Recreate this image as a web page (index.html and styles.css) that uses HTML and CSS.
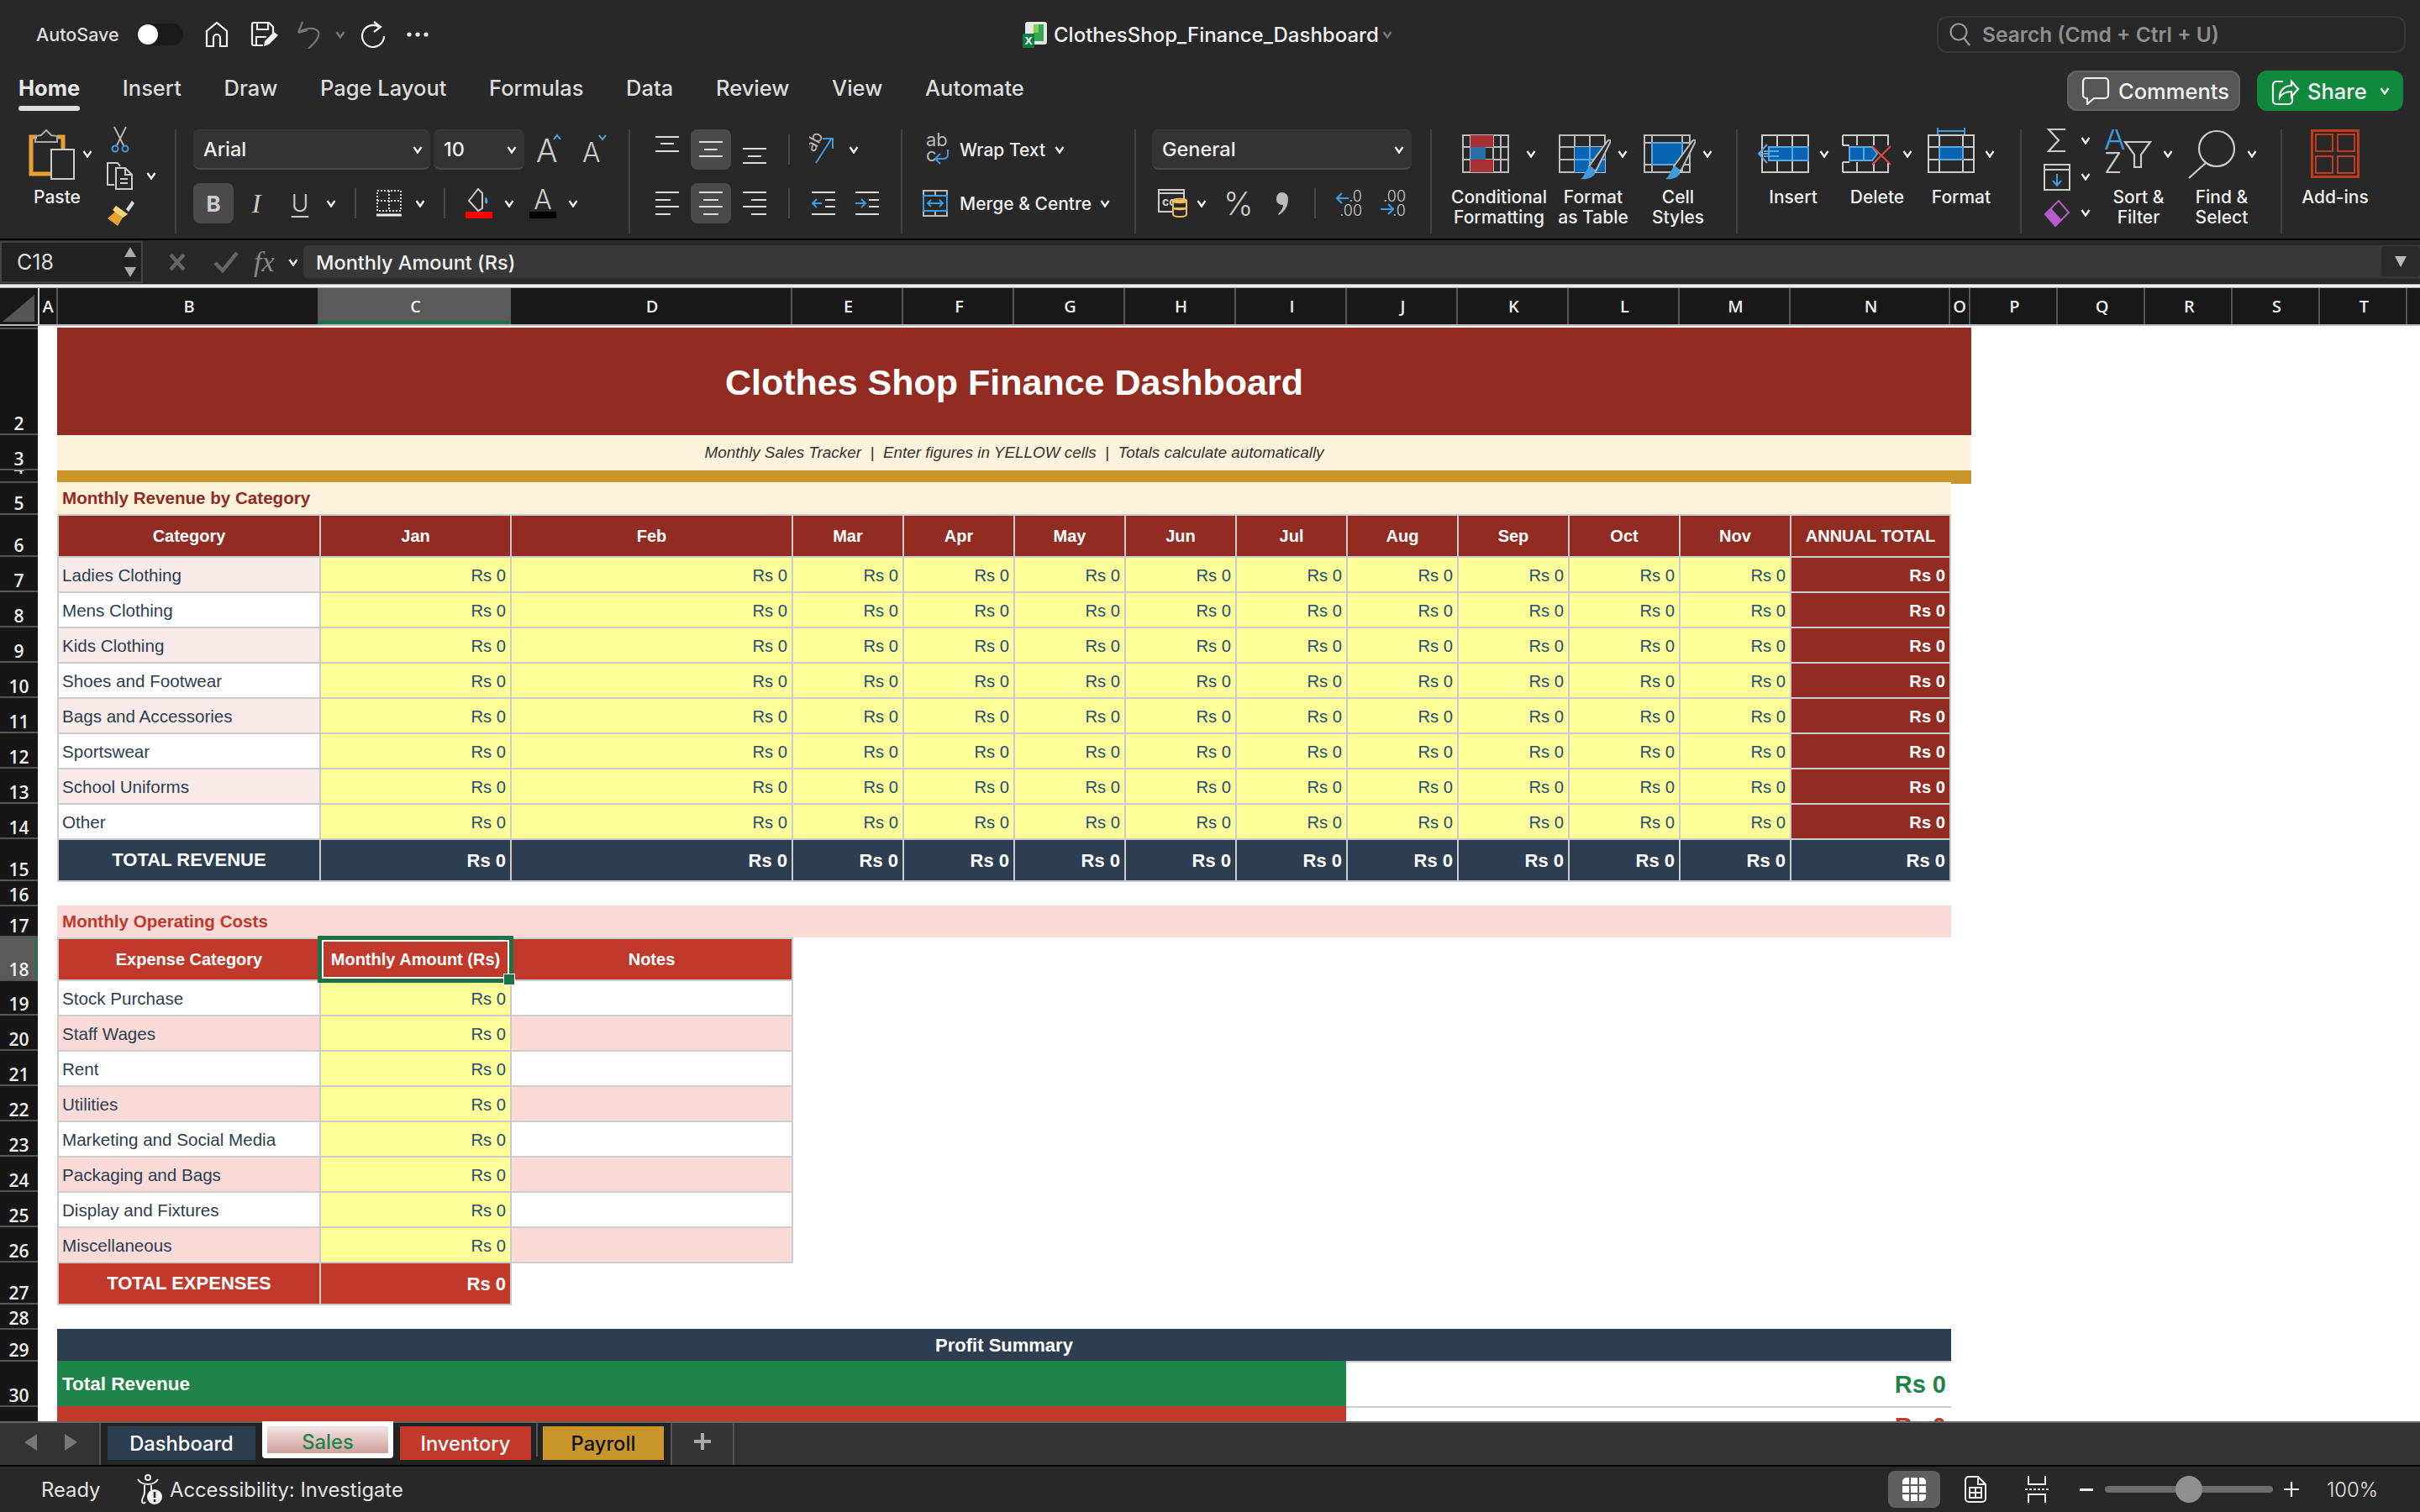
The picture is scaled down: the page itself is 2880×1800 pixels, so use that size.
FILE: index.html
```html
<!DOCTYPE html>
<html lang="en">
<head>
<meta charset="utf-8">
<title>ClothesShop_Finance_Dashboard</title>
<link rel="stylesheet" href="styles.css">
</head>
<body>
<svg class="defs" width="0" height="0"><symbol id="ch" viewBox="0 0 12 10"><path d="M1.500 2 6 8.500 10.500 2" fill="none" stroke="currentColor" stroke-width="2.400"/></symbol></svg>
<div class="app">

<header class="top">
  <span class="autosave">AutoSave</span>
  <span class="toggle"><span class="knob"></span></span>
  <svg class="ic-home" width="30" height="32" viewBox="0 0 30 32"><path d="M3 30V12L15 2l12 10v18h-8V20a4 4 0 0 0-8 0v10z" fill="none" stroke="#f2f2f2" stroke-width="2.200"/></svg>
  <svg class="ic-save" width="34" height="32" viewBox="0 0 34 32"><path d="M15 29H4a2 2 0 0 1-2-2V4a2 2 0 0 1 2-2h18l5 5v8M8 2v8h13V2M7 29V19h12" fill="none" stroke="#f2f2f2" stroke-width="2.200"/><path d="M16 30l1-6L28 13l5 4-11 11z" fill="#f2f2f2"/></svg>
  <svg class="ic-undo" width="28" height="34" viewBox="0 0 28 34"><path d="M2 15 7 2M2 15l11-3M2 15c6-5 20-8 24-1 2 6-4 13-12 20" fill="none" stroke="#777" stroke-width="2.200"/></svg>
  <svg class="ch dim m-undo"><use href="#ch"/></svg>
  <svg class="ic-redo" width="30" height="32" viewBox="0 0 30 32"><path d="M22 7a13 13 0 1 0 6 11" fill="none" stroke="#f2f2f2" stroke-width="2.200"/><path d="M16 1l8 6-8 6" fill="none" stroke="#f2f2f2" stroke-width="2.200"/></svg>
  <svg class="ic-dots" width="26" height="6" viewBox="0 0 26 6"><circle cx="3" cy="3" r="2.600" fill="#eee"/><circle cx="13" cy="3" r="2.600" fill="#eee"/><circle cx="23" cy="3" r="2.600" fill="#eee"/></svg>
  <div class="docname">
    <svg width="30" height="32" viewBox="0 0 30 32"><rect x="3" y="1" width="26" height="27" rx="3" fill="#e8e8e8"/><rect x="13" y="4" width="12" height="20" fill="#36a852"/><rect x="13" y="4" width="6" height="10" fill="#7bd04e"/><rect x="0" y="15" width="14" height="17" fill="#107c41"/><text x="7" y="28" class="xl">X</text></svg>
    <span class="docname-t">ClothesShop_Finance_Dashboard</span>
    <svg class="ch dim"><use href="#ch"/></svg>
  </div>
  <div class="search">
    <svg width="28" height="30" viewBox="0 0 28 30"><circle cx="12" cy="12" r="9.500" fill="none" stroke="#999" stroke-width="2.200"/><path d="M18 19l7 9" stroke="#999" stroke-width="2.200"/></svg>
    <span>Search (Cmd + Ctrl + U)</span>
  </div>
</header>

<nav class="menu">
  <span class="tab on">Home</span>
  <span class="tab">Insert</span>
  <span class="tab">Draw</span>
  <span class="tab">Page Layout</span>
  <span class="tab">Formulas</span>
  <span class="tab">Data</span>
  <span class="tab">Review</span>
  <span class="tab">View</span>
  <span class="tab">Automate</span>
  <button class="comments">
    <svg width="34" height="34" viewBox="0 0 34 34"><path d="M6 2h22a4 4 0 0 1 4 4v16a4 4 0 0 1-4 4H15l-8 7v-7H6a4 4 0 0 1-4-4V6a4 4 0 0 1 4-4z" fill="none" stroke="#f2f2f2" stroke-width="2.200"/></svg>
    <span>Comments</span>
  </button>
  <button class="share">
    <svg width="34" height="36" viewBox="0 0 34 36"><path d="M14 7H6a4 4 0 0 0-4 4v19a4 4 0 0 0 4 4h15a4 4 0 0 0 4-4v-5" fill="none" stroke="#f2f2f2" stroke-width="2.200"/><path d="M10 26c0-9 6-14 14-14V7l8 9-8 9v-6c-7 0-11 2-14 7z" fill="none" stroke="#f2f2f2" stroke-width="2.200"/></svg>
    <span>Share</span>
    <svg class="ch"><use href="#ch"/></svg>
  </button>
</nav>

<section class="ribbon">
  <div class="grp g1">
    <div class="paste">
      <svg width="56" height="62" viewBox="0 0 56 62"><path d="M10 10H3v44h24M34 10h7v14" fill="none" stroke="#e8a030" stroke-width="5"/><path d="M8 16V9l7-1 6-6 6 6 7 1v7z" fill="none" stroke="#aaa" stroke-width="2"/><rect x="27" y="25" width="27" height="35" fill="#282828" stroke="#ccc" stroke-width="2"/></svg>
      <span class="lbl">Paste</span>
    </div>
    <svg class="ch m-p"><use href="#ch"/></svg>
    <div class="clip">
      <svg class="m-sc" width="22" height="34" viewBox="0 0 22 34"><path d="M4 1l11 22M18 1 7 23" stroke="#bbb" stroke-width="1.800" fill="none"/><circle cx="5" cy="27" r="3.500" fill="none" stroke="#3f9ade" stroke-width="2"/><circle cx="17" cy="27" r="3.500" fill="none" stroke="#3f9ade" stroke-width="2"/></svg>
      <div class="copy">
        <svg width="34" height="34" viewBox="0 0 34 34"><path d="M10 28H2V2h12l3 4M12 8h11l8 8v17H12zM23 8v8h8M17 21h9M17 26h9" fill="none" stroke="#ccc" stroke-width="2"/></svg>
        <svg class="ch"><use href="#ch"/></svg>
      </div>
      <svg class="m-br" width="34" height="34" viewBox="0 0 34 34"><path d="M24 13 31 3l3 3-7 10z" fill="#ddd"/><path d="M12 9l14 10-6 4-6 10-12-9 8-7z" fill="#e8a030"/><path d="M12 9l14 10-6 4-12-9z" fill="#f4d57a"/></svg>
    </div>
  </div>

  <div class="grp g2">
    <div class="row">
      <div class="sel sel-font"><span>Arial</span><svg class="ch"><use href="#ch"/></svg></div>
      <div class="sel sel-size"><span>10</span><svg class="ch"><use href="#ch"/></svg></div>
      <svg class="m14" width="32" height="48" viewBox="0 0 32 48"><text x="0" y="39" class="big-a">A</text><path d="M21 12l4-5 4 5" fill="none" stroke="#5aa7e0" stroke-width="2"/></svg>
      <svg class="m23" width="30" height="48" viewBox="0 0 30 48"><text x="0" y="39" class="mid-a">A</text><path d="M20 7l4 5 4-5" fill="none" stroke="#5aa7e0" stroke-width="2"/></svg>
    </div>
    <div class="row">
      <span class="btn on-b w48">B</span>
      <span class="btn ital w46 m4">I</span>
      <span class="btn und w46 m6">U</span>
      <svg class="ch m8"><use href="#ch"/></svg>
      <i class="div m22"></i>
      <svg class="m24" width="30" height="32" viewBox="0 0 30 32"><path d="M1 1h28v24H1zM15 1v24M1 13h28" fill="none" stroke="#ddd" stroke-width="2" stroke-dasharray="2 2"/><path d="M0 30h30" stroke="#eee" stroke-width="3"/></svg>
      <svg class="ch m16"><use href="#ch"/></svg>
      <i class="div m22"></i>
      <svg class="m24" width="32" height="36" viewBox="0 0 32 36"><path d="M4 15 15 1l5 5v18l-5 3z" fill="none" stroke="#ccc" stroke-width="2"/><path d="M24 10c2 3 3 5 2 8-2 2-4-1-2-8z" fill="#5aa7e0"/><rect y="28" width="32" height="8" fill="#f00"/></svg>
      <svg class="ch m14"><use href="#ch"/></svg>
      <svg class="m18" width="32" height="36" viewBox="0 0 32 36"><text x="16" y="25" class="color-a">A</text><rect y="28" width="32" height="8" fill="#000"/></svg>
      <svg class="ch m14"><use href="#ch"/></svg>
    </div>
  </div>

  <div class="grp g3">
    <div class="row">
      <svg width="28" height="48" viewBox="0 0 28 48"><path d="M0 9h28M6 17h16M0 26h28" stroke="#ddd" stroke-width="2"/></svg>
      <span class="btn on-b w48 m14"><svg width="28" height="48" viewBox="0 0 28 48"><path d="M0 15h28M6 24h16M0 32h28" stroke="#ddd" stroke-width="2"/></svg></span>
      <svg class="m14" width="28" height="48" viewBox="0 0 28 48"><path d="M0 23h28M6 32h16M0 40h28" stroke="#ddd" stroke-width="2"/></svg>
      <i class="div m26"></i>
      <svg class="m23" width="34" height="48" viewBox="0 0 34 48"><text x="0" y="0" class="ab-rot" transform="translate(6 28) rotate(-62)">ab</text><path d="M8 40 26 12M16 11h12v12" fill="none" stroke="#3f9ade" stroke-width="2"/></svg>
      <svg class="ch m13"><use href="#ch"/></svg>
    </div>
    <div class="row">
      <svg width="28" height="48" viewBox="0 0 28 48"><path d="M0 11h28M0 20h18M0 28h28M0 37h18" stroke="#ddd" stroke-width="2"/></svg>
      <span class="btn on-b w48 m14"><svg width="28" height="48" viewBox="0 0 28 48"><path d="M0 11h28M5 20h18M0 28h28M5 37h18" stroke="#ddd" stroke-width="2"/></svg></span>
      <svg class="m14" width="28" height="48" viewBox="0 0 28 48"><path d="M0 11h28M10 20h18M0 28h28M10 37h18" stroke="#ddd" stroke-width="2"/></svg>
      <i class="div m26"></i>
      <svg class="m26" width="28" height="48" viewBox="0 0 28 48"><path d="M0 11h28M16 20h12M16 28h12M0 37h28" stroke="#ddd" stroke-width="2"/><path d="M12 24H1M6 19l-5 5 5 5" fill="none" stroke="#3f9ade" stroke-width="2"/></svg>
      <svg class="m24" width="28" height="48" viewBox="0 0 28 48"><path d="M0 11h28M16 20h12M16 28h12M0 37h28" stroke="#ddd" stroke-width="2"/><path d="M0 24h12M7 19l5 5-5 5" fill="none" stroke="#3f9ade" stroke-width="2"/></svg>
    </div>
  </div>

  <div class="grp g4">
    <div class="row">
      <svg width="34" height="48" viewBox="0 0 34 48"><text x="4" y="20" class="wrap-t">ab</text><text x="4" y="38" class="wrap-t">c</text><path d="M30 24v6c0 4-3 5-6 5H15M21 29l-6 6 6 6" fill="none" stroke="#3f9ade" stroke-width="2"/></svg>
      <span class="cmd m10">Wrap Text</span>
      <svg class="ch m11"><use href="#ch"/></svg>
    </div>
    <div class="row">
      <svg width="30" height="48" viewBox="0 0 30 48"><path d="M1 9h28v30H1zM15 9v6M15 33v6" fill="none" stroke="#bbb" stroke-width="2"/><path d="M1 15h28v18H1z" fill="none" stroke="#3f9ade" stroke-width="2"/><path d="M6 24h18M10 20l-4 4 4 4M20 20l4 4-4 4" fill="none" stroke="#3f9ade" stroke-width="2"/></svg>
      <span class="cmd m14">Merge &amp; Centre</span>
      <svg class="ch m10"><use href="#ch"/></svg>
    </div>
  </div>

  <div class="grp g5">
    <div class="row">
      <div class="sel sel-num"><span>General</span><svg class="ch"><use href="#ch"/></svg></div>
    </div>
    <div class="row">
      <svg class="m7" width="36" height="34" viewBox="0 0 36 34"><path d="M1 1h30v26H1z" fill="none" stroke="#ccc" stroke-width="2"/><path d="M1 5h30" stroke="#ccc" stroke-width="2"/><text x="5" y="20" class="cc">cc</text><path d="M18 14c0-3 16-3 16 0v16c0 4-16 4-16 0z" fill="#282828" stroke="#f0c060" stroke-width="2"/><path d="M18 14c0 3 16 3 16 0zM18 22c0 3 16 3 16 0" fill="#f0c060" stroke="#f0c060" stroke-width="2"/></svg>
      <svg class="ch m10"><use href="#ch"/></svg>
      <span class="pct m20">%</span>
      <svg class="m31" width="15" height="28" viewBox="0 0 15 28"><path d="M7 1c5 0 8 3 8 8 0 8-4 15-11 19l-1-1c4-4 6-8 6-11-4 0-8-2-8-7 0-5 3-8 6-8z" fill="#bbb"/></svg>
      <i class="div m31"></i>
      <svg class="m23" width="32" height="34" viewBox="0 0 32 34"><text x="32" y="15" class="dec">.0</text><text x="32" y="32" class="dec">.00</text><path d="M16 11H2M8 5 2 11l6 6" fill="none" stroke="#3f9ade" stroke-width="2.200"/></svg>
      <svg class="m20" width="32" height="34" viewBox="0 0 32 34"><text x="32" y="15" class="dec">.00</text><text x="32" y="32" class="dec">.0</text><path d="M2 24h14M11 18l6 6-6 6" fill="none" stroke="#3f9ade" stroke-width="2.200"/></svg>
    </div>
  </div>

  <div class="grp g6">
    <div class="big w120">
      <div class="bt">
        <svg class="t6" width="56" height="46" viewBox="0 0 56 46"><path d="M1 1h54v44H1zM10 1v44M37 1v44M46 1v44M1 15h54M1 30h54" fill="none" stroke="#bbb" stroke-width="2"/><rect x="10" y="1" width="27" height="14" fill="#a82f32"/><rect x="10" y="15" width="18" height="15" fill="#2a6ea8"/><rect x="10" y="30" width="27" height="15" fill="#a82f32"/></svg>
        <svg class="ch m20 t24"><use href="#ch"/></svg>
      </div>
      <span class="lbl">Conditional<br>Formatting</span>
    </div>
    <div class="big w100 m2">
      <div class="bt">
        <svg class="t6" width="62" height="56" viewBox="0 0 62 56"><path d="M1 1h54v44H1zM19 1v44M37 1v44M1 15h54M1 30h54" fill="none" stroke="#bbb" stroke-width="2"/><rect x="19" y="15" width="36" height="30" fill="#0a64b4"/><path d="M19 30h36M37 15v30" stroke="#5aa7e0" stroke-width="2"/><path d="M36 38 58 8c3-3 4 0 3 2L44 44z" fill="#282828" stroke="#bbb" stroke-width="2"/><path d="M36 38c4 0 8 4 7 9-3 5-10 7-17 6 4-2 5-8 10-15z" fill="#3f9ade"/></svg>
        <svg class="ch m8 t24"><use href="#ch"/></svg>
      </div>
      <span class="lbl">Format<br>as Table</span>
    </div>
    <div class="big w90 m6">
      <div class="bt">
        <svg class="t6" width="62" height="56" viewBox="0 0 62 56"><path d="M1 1h54v44H1zM10 1v44M46 1v44M1 10h54M1 36h54" fill="none" stroke="#bbb" stroke-width="2"/><rect x="10" y="10" width="36" height="26" fill="#0a64b4" stroke="#5aa7e0" stroke-width="2"/><path d="M36 38 58 8c3-3 4 0 3 2L44 44z" fill="#282828" stroke="#bbb" stroke-width="2"/><path d="M36 38c4 0 8 4 7 9-3 5-10 7-17 6 4-2 5-8 10-15z" fill="#3f9ade"/></svg>
        <svg class="ch m8 t24"><use href="#ch"/></svg>
      </div>
      <span class="lbl">Cell<br>Styles</span>
    </div>
  </div>

  <div class="grp g7">
    <div class="big w100">
      <div class="bt">
        <svg class="t6" width="62" height="46" viewBox="0 0 62 46"><path d="M6 1h55v44H6zM24 1v44M42 1v44" fill="none" stroke="#ccc" stroke-width="2"/><rect x="14" y="15" width="47" height="16" fill="#0a64b4" stroke="#5aa7e0" stroke-width="2"/><path d="M42 15v16M14 23H2M12 12 2 23l10 11M26 20H8M26 26H8" fill="none" stroke="#5aa7e0" stroke-width="2"/></svg>
        <svg class="ch m12 t24"><use href="#ch"/></svg>
      </div>
      <span class="lbl">Insert</span>
    </div>
    <div class="big w100">
      <div class="bt">
        <svg class="t6" width="60" height="46" viewBox="0 0 60 46"><path d="M1 1h54v12M1 1v12M1 45h54V33M1 45V33M1 13h8M1 33h8M18 1v12M18 33v12M38 1v12M38 33v12" fill="none" stroke="#ccc" stroke-width="2"/><path d="M9 15h27l6 8-6 8H9z" fill="#0a64b4" stroke="#5aa7e0" stroke-width="2"/><path d="M26 15v16" stroke="#5aa7e0" stroke-width="2"/><path d="M36 14l22 22M58 14 36 36" stroke="#e24a4a" stroke-width="2"/></svg>
        <svg class="ch m12 t24"><use href="#ch"/></svg>
      </div>
      <span class="lbl">Delete</span>
    </div>
    <div class="big w100">
      <div class="bt">
        <svg class="t-4" width="56" height="56" viewBox="0 0 56 56"><path d="M12 6h32M12 2v8M44 2v8" stroke="#3f9ade" stroke-width="2"/><path d="M1 11h54v44H1zM14 11v44M42 11v44M1 25h54M1 40h54" fill="none" stroke="#ccc" stroke-width="2"/><rect x="14" y="25" width="28" height="15" fill="#0a64b4" stroke="#5aa7e0" stroke-width="2"/></svg>
        <svg class="ch m12 t24"><use href="#ch"/></svg>
      </div>
      <span class="lbl">Format</span>
    </div>
  </div>

  <div class="grp g8">
    <div class="stack">
      <div class="sr"><svg width="30" height="30" viewBox="0 0 30 30"><path d="M26 2H6l12 13L6 28h20" fill="none" stroke="#ccc" stroke-width="2.200"/></svg><svg class="ch m14"><use href="#ch"/></svg></div>
      <div class="sr"><svg width="32" height="32" viewBox="0 0 32 32"><path d="M1 1h30v30H1zM1 7h30" fill="none" stroke="#ccc" stroke-width="2"/><path d="M16 12v14M11 20l5 6 5-6" fill="none" stroke="#3f9ade" stroke-width="2"/></svg><svg class="ch m12"><use href="#ch"/></svg></div>
      <div class="sr"><svg width="32" height="32" viewBox="0 0 32 32"><path d="M2 17 18 1l12 14-16 16z" fill="none" stroke="#b65cc8" stroke-width="2"/><path d="M2 17l7-7 12 13-7 8z" fill="#b65cc8"/></svg><svg class="ch m12"><use href="#ch"/></svg></div>
    </div>
    <div class="big w90">
      <div class="bt">
        <svg width="58" height="56" viewBox="0 0 58 56"><text x="0" y="24" class="az-a">A</text><text x="0" y="52" class="az-z">Z</text><path d="M25 15h30l-11 15v15h-8V30z" fill="none" stroke="#ccc" stroke-width="2.200"/></svg>
        <svg class="ch m12 t24"><use href="#ch"/></svg>
      </div>
      <span class="lbl">Sort &amp;<br>Filter</span>
    </div>
    <div class="big w90 m9">
      <div class="bt">
        <svg width="60" height="60" viewBox="0 0 60 60"><circle cx="36" cy="23" r="21" fill="none" stroke="#ccc" stroke-width="2.200"/><path d="M23 40 3 58" stroke="#ccc" stroke-width="2.200"/></svg>
        <svg class="ch m12 t24"><use href="#ch"/></svg>
      </div>
      <span class="lbl">Find &amp;<br>Select</span>
    </div>
  </div>

  <div class="grp g9">
    <div class="big w100">
      <div class="bt">
        <svg width="58" height="58" viewBox="0 0 58 58"><rect x="1.500" y="1.500" width="55" height="55" fill="none" stroke="#c03a1c" stroke-width="3"/><path d="M6 6h20v20H6zM32 6h20v20H32zM6 32h20v20H6zM32 32h20v20H32z" fill="none" stroke="#c03a1c" stroke-width="2"/></svg>
      </div>
      <span class="lbl">Add-ins</span>
    </div>
  </div>
</section>

<div class="fbar">
  <div class="namebox">
    <span>C18</span>
    <svg width="14" height="36" viewBox="0 0 14 36"><path d="M7 0l7 12H0zM0 24h14l-7 12z" fill="#aaa"/></svg>
  </div>
  <svg class="fx-x" width="22" height="24" viewBox="0 0 22 24"><path d="M3 3l16 18M19 3 3 21" stroke="#666" stroke-width="4.500"/></svg>
  <svg class="fx-c" width="30" height="26" viewBox="0 0 30 26"><path d="M2 14l9 9L28 2" fill="none" stroke="#666" stroke-width="4.500"/></svg>
  <span class="fx">fx</span>
  <svg class="ch fx-ch"><use href="#ch"/></svg>
  <div class="finput">
    <span>Monthly Amount (Rs)</span>
    <span class="fdrop"><svg width="14" height="14" viewBox="0 0 14 14"><path d="M0 1h14L7 14z" fill="#bbb"/></svg></span>
  </div>
</div>
<div class="fsep"></div>

<main class="sheet">
  <div class="cols">
    <div class="corner"><svg width="38" height="32" viewBox="0 0 38 32"><path d="M38 0v32H0z" fill="#555"/></svg></div>
    <div class="col ca">A</div>
    <div class="col cb">B</div>
    <div class="col cc2 sel-col">C</div>
    <div class="col cd">D</div>
    <div class="col cm">E</div><div class="col cm">F</div><div class="col cm">G</div><div class="col cm">H</div><div class="col cm">I</div><div class="col cm">J</div><div class="col cm">K</div><div class="col cm">L</div><div class="col cm">M</div>
    <div class="col cn">N</div>
    <div class="col co">O</div>
    <div class="col cp">P</div><div class="col cp">Q</div><div class="col cp">R</div><div class="col cp">S</div><div class="col cp">T</div>
  </div>
  <div class="body">
    <div class="rows">
      <div class="rh h4"></div>
      <div class="rh h126">2</div>
      <div class="rh h42">3</div>
      <div class="rh h15">4</div>
      <div class="rh h38">5</div>
      <div class="rh h50">6</div>
      <div class="rh h42">7</div><div class="rh h42">8</div><div class="rh h42">9</div><div class="rh h42">10</div><div class="rh h42">11</div><div class="rh h42">12</div><div class="rh h42">13</div><div class="rh h42">14</div>
      <div class="rh h50">15</div>
      <div class="rh h30">16</div>
      <div class="rh h37">17</div>
      <div class="rh h52 rsel">18</div>
      <div class="rh h41">19</div>
      <div class="rh h42">20</div><div class="rh h42">21</div><div class="rh h42">22</div><div class="rh h42">23</div><div class="rh h42">24</div><div class="rh h42">25</div><div class="rh h42">26</div>
      <div class="rh h50">27</div>
      <div class="rh h30">28</div>
      <div class="rh h38">29</div>
      <div class="rh h54">30</div>
      <div class="rh h54"></div>
    </div>
    <div class="grid">
      <div class="title">Clothes Shop Finance Dashboard</div>
      <div class="sub">Monthly Sales Tracker  |  Enter figures in YELLOW cells  |  Totals calculate automatically</div>
      <div class="gold"></div>
      <div class="sec sec-rev">Monthly Revenue by Category</div>

      <div class="tbl t-rev">
        <div class="th red1">Category</div><div class="th red1">Jan</div><div class="th red1">Feb</div><div class="th red1">Mar</div><div class="th red1">Apr</div><div class="th red1">May</div><div class="th red1">Jun</div><div class="th red1">Jul</div><div class="th red1">Aug</div><div class="th red1">Sep</div><div class="th red1">Oct</div><div class="th red1">Nov</div><div class="th red1">ANNUAL TOTAL</div>

        <div class="lb pk1">Ladies Clothing</div><div class="y">Rs 0</div><div class="y">Rs 0</div><div class="y">Rs 0</div><div class="y">Rs 0</div><div class="y">Rs 0</div><div class="y">Rs 0</div><div class="y">Rs 0</div><div class="y">Rs 0</div><div class="y">Rs 0</div><div class="y">Rs 0</div><div class="y">Rs 0</div><div class="at">Rs 0</div>
        <div class="lb">Mens Clothing</div><div class="y">Rs 0</div><div class="y">Rs 0</div><div class="y">Rs 0</div><div class="y">Rs 0</div><div class="y">Rs 0</div><div class="y">Rs 0</div><div class="y">Rs 0</div><div class="y">Rs 0</div><div class="y">Rs 0</div><div class="y">Rs 0</div><div class="y">Rs 0</div><div class="at">Rs 0</div>
        <div class="lb pk1">Kids Clothing</div><div class="y">Rs 0</div><div class="y">Rs 0</div><div class="y">Rs 0</div><div class="y">Rs 0</div><div class="y">Rs 0</div><div class="y">Rs 0</div><div class="y">Rs 0</div><div class="y">Rs 0</div><div class="y">Rs 0</div><div class="y">Rs 0</div><div class="y">Rs 0</div><div class="at">Rs 0</div>
        <div class="lb">Shoes and Footwear</div><div class="y">Rs 0</div><div class="y">Rs 0</div><div class="y">Rs 0</div><div class="y">Rs 0</div><div class="y">Rs 0</div><div class="y">Rs 0</div><div class="y">Rs 0</div><div class="y">Rs 0</div><div class="y">Rs 0</div><div class="y">Rs 0</div><div class="y">Rs 0</div><div class="at">Rs 0</div>
        <div class="lb pk1">Bags and Accessories</div><div class="y">Rs 0</div><div class="y">Rs 0</div><div class="y">Rs 0</div><div class="y">Rs 0</div><div class="y">Rs 0</div><div class="y">Rs 0</div><div class="y">Rs 0</div><div class="y">Rs 0</div><div class="y">Rs 0</div><div class="y">Rs 0</div><div class="y">Rs 0</div><div class="at">Rs 0</div>
        <div class="lb">Sportswear</div><div class="y">Rs 0</div><div class="y">Rs 0</div><div class="y">Rs 0</div><div class="y">Rs 0</div><div class="y">Rs 0</div><div class="y">Rs 0</div><div class="y">Rs 0</div><div class="y">Rs 0</div><div class="y">Rs 0</div><div class="y">Rs 0</div><div class="y">Rs 0</div><div class="at">Rs 0</div>
        <div class="lb pk1">School Uniforms</div><div class="y">Rs 0</div><div class="y">Rs 0</div><div class="y">Rs 0</div><div class="y">Rs 0</div><div class="y">Rs 0</div><div class="y">Rs 0</div><div class="y">Rs 0</div><div class="y">Rs 0</div><div class="y">Rs 0</div><div class="y">Rs 0</div><div class="y">Rs 0</div><div class="at">Rs 0</div>
        <div class="lb">Other</div><div class="y">Rs 0</div><div class="y">Rs 0</div><div class="y">Rs 0</div><div class="y">Rs 0</div><div class="y">Rs 0</div><div class="y">Rs 0</div><div class="y">Rs 0</div><div class="y">Rs 0</div><div class="y">Rs 0</div><div class="y">Rs 0</div><div class="y">Rs 0</div><div class="at">Rs 0</div>

        <div class="tt navy">TOTAL REVENUE</div><div class="tr navy">Rs 0</div><div class="tr navy">Rs 0</div><div class="tr navy">Rs 0</div><div class="tr navy">Rs 0</div><div class="tr navy">Rs 0</div><div class="tr navy">Rs 0</div><div class="tr navy">Rs 0</div><div class="tr navy">Rs 0</div><div class="tr navy">Rs 0</div><div class="tr navy">Rs 0</div><div class="tr navy">Rs 0</div><div class="tr navy">Rs 0</div>
      </div>

      <div class="sec sec-cost">Monthly Operating Costs</div>

      <div class="tbl t-cost">
        <div class="th red2">Expense Category</div>
        <div class="th red2 active">Monthly Amount (Rs)<span class="handle"></span></div>
        <div class="th red2">Notes</div>
        <div class="lb">Stock Purchase</div><div class="y">Rs 0</div><div class="nt"></div>
        <div class="lb pk2">Staff Wages</div><div class="y">Rs 0</div><div class="nt pk2"></div>
        <div class="lb">Rent</div><div class="y">Rs 0</div><div class="nt"></div>
        <div class="lb pk2">Utilities</div><div class="y">Rs 0</div><div class="nt pk2"></div>
        <div class="lb">Marketing and Social Media</div><div class="y">Rs 0</div><div class="nt"></div>
        <div class="lb pk2">Packaging and Bags</div><div class="y">Rs 0</div><div class="nt pk2"></div>
        <div class="lb">Display and Fixtures</div><div class="y">Rs 0</div><div class="nt"></div>
        <div class="lb pk2">Miscellaneous</div><div class="y">Rs 0</div><div class="nt pk2"></div>
      </div>
      <div class="tbl t-exp">
        <div class="tt red2">TOTAL EXPENSES</div><div class="tr red2">Rs 0</div>
      </div>

      <div class="profit">Profit Summary</div>
      <div class="pr">
        <div class="pl green">Total Revenue</div>
        <div class="pv pv-g">Rs 0</div>
      </div>
      <div class="pr">
        <div class="pl red2">Total Expenses</div>
        <div class="pv pv-r">Rs 0</div>
      </div>
    </div>
  </div>
</main>

<div class="tabsbar">
  <div class="nav">
    <svg width="16" height="20" viewBox="0 0 16 20"><path d="M15 0v20L0 10z" fill="#777"/></svg>
    <svg width="16" height="20" viewBox="0 0 16 20"><path d="M1 0v20l15-10z" fill="#777"/></svg>
  </div>
  <div class="strip">
    <span class="st st-d">Dashboard</span>
    <span class="st-w"><span class="st-s">Sales</span></span>
    <span class="st st-i">Inventory</span>
    <i class="st-sep"></i>
    <span class="st st-p">Payroll</span>
  </div>
  <div class="plus"><svg width="22" height="22" viewBox="0 0 22 22"><path d="M11 1v20M1 11h20" stroke="#aaa" stroke-width="4"/></svg></div>
</div>

<footer class="status">
  <span class="ready">Ready</span>
  <svg class="acc" width="32" height="36" viewBox="0 0 32 36"><circle cx="14" cy="4" r="3" fill="none" stroke="#eee" stroke-width="2"/><path d="M2 6c3 5 7 6 12 6s9-1 12-6M10 13v8c0 5-3 7-3 11 0 3 3 3 4 1M18 13v8" fill="none" stroke="#eee" stroke-width="2"/><circle cx="22" cy="27" r="9" fill="#eee"/><path d="M22 21v7M22 30v3" stroke="#282828" stroke-width="2.600"/></svg>
  <span class="acc-t">Accessibility: Investigate</span>
  <div class="view on-v"><svg width="28" height="28" viewBox="0 0 28 28"><path d="M5 0h3v8H0V5a5 5 0 0 1 5-5zM10 0h8v8h-8zM20 0h3a5 5 0 0 1 5 5v3h-8zM0 10h8v8H0zM10 10h8v8h-8zM20 10h8v8h-8zM0 20h8v8H5a5 5 0 0 1-5-5zM10 20h8v8h-8zM20 20h8v3a5 5 0 0 1-5 5h-3z" fill="#fff"/></svg></div>
  <svg class="v-page" width="26" height="32" viewBox="0 0 26 32"><path d="M5 1h11l9 9v17a4 4 0 0 1-4 4H5a4 4 0 0 1-4-4V5a4 4 0 0 1 4-4zM16 1v9h9" fill="none" stroke="#eee" stroke-width="2"/><path d="M6 14h14v12H6zM6 20h14M13 14v12" fill="none" stroke="#eee" stroke-width="2"/></svg>
  <svg class="v-break" width="28" height="32" viewBox="0 0 28 32"><path d="M4 0v10h20V0M4 32V22h20v10" fill="none" stroke="#eee" stroke-width="2"/><path d="M0 16h28" stroke="#eee" stroke-width="2" stroke-dasharray="3 2"/></svg>
  <i class="z-minus"></i>
  <div class="slider"><span class="zknob"></span></div>
  <svg class="z-plus" width="18" height="18" viewBox="0 0 18 18"><path d="M9 0v18M0 9h18" stroke="#eee" stroke-width="2.200"/></svg>
  <span class="zoom">100%</span>
</footer>

</div>
</body>
</html>
```
FILE: styles.css
```css
* { box-sizing: border-box; }
html, body { margin: 0; padding: 0; background: #282828; }
body { font-family: "Inter", "Liberation Sans", sans-serif; color: #e8e8e8; }
.defs { position: absolute; }
.app { width: 2880px; height: 1800px; display: flex; flex-direction: column; overflow: hidden; background: #282828; }
svg { display: block; flex: none; }
i { display: block; flex: none; font-style: normal; }

.ch { width: 12px; height: 10px; color: #eee; flex: none; }
.ch.dim { color: #777; }

/* Title bar */
.top { height: 82px; flex: none; display: flex; align-items: center; padding-left: 43px; }
.autosave { font-size: 21.500px; font-weight: 500; color: #ddd; width: 99px; white-space: nowrap; }
.toggle { margin-left: 21px; width: 55px; height: 26px; border-radius: 13px; background: #1a1a1a; display: block; padding: 1px; }
.knob { display: block; width: 24px; height: 24px; border-radius: 12px; background: #fff; }
.ic-home { margin-left: 25px; }
.ic-save { margin-left: 25px; }
.ic-undo { margin-left: 21px; }
.m-undo { margin-left: 18px; }
.ic-redo { margin-left: 18px; }
.ic-dots { margin-left: 25px; }
.docname { margin-left: 707px; display: flex; align-items: center; }
.docname-t { font-size: 24px; font-weight: 500; color: #f0f0f0; margin-left: 7px; white-space: nowrap; width: 381px; }
.docname .ch { margin-left: 10px; }
.xl { font: 700 13px "Liberation Sans", sans-serif; fill: #fff; text-anchor: middle; }
.search { margin-left: auto; margin-right: 17px; width: 558px; height: 44px; border: 2px solid #383838; border-radius: 12px; display: flex; align-items: center; padding-left: 12px; font-size: 24.500px; font-weight: 600; color: #8f8f8f; }
.search span { margin-left: 12px; white-space: nowrap; }

/* Menu */
.menu { height: 68px; flex: none; display: flex; align-items: flex-start; padding-left: 22px; color: #dcdcdc; font-size: 25.500px; font-weight: 500; }
.tab { display: block; margin-right: 50.700px; line-height: 36px; padding-top: 5px; white-space: nowrap; }
.tab.on { font-weight: 700; color: #e8e8e8; }
.tab.on::after { content: ""; display: block; height: 6px; border-radius: 3px; background: #ddd; margin-top: 3px; }
.comments, .share { font: inherit; border: 0; display: flex; align-items: center; height: 48px; border-radius: 12px; margin-top: 2px; color: #f2f2f2; padding: 0; font-size: 25.500px; font-weight: 500; }
.comments { margin-left: auto; width: 206px; background: #565656; box-shadow: inset 0 0 0 2px #636363; padding-left: 17px; }
.comments span { margin-left: 10px; }
.share { margin-left: 20px; margin-right: 20px; width: 174px; background: #10893e; padding-left: 17px; }
.share span { margin-left: 9px; }
.share .ch { margin-left: 15px; }

/* Ribbon */
.ribbon { height: 134px; flex: none; display: flex; align-items: flex-start; padding-top: 4px; }
.grp { height: 124px; flex: none; border-right: 2px solid #444; display: flex; }
.g1 { width: 210px; padding-left: 34px; }
.g2 { width: 540px; padding-left: 20px; flex-direction: column; gap: 16px; }
.g3 { width: 324px; padding-left: 30px; flex-direction: column; gap: 16px; }
.g4 { width: 278px; padding-left: 24px; flex-direction: column; gap: 16px; }
.g5 { width: 352px; padding-left: 19px; flex-direction: column; gap: 16px; }
.g6 { width: 364px; padding-left: 20px; }
.g7 { width: 338px; padding-left: 16px; }
.g8 { width: 310px; padding-left: 26px; }
.g9 { border-right: 0; padding-left: 13px; }
.row { display: flex; align-items: center; height: 48px; }
.lbl { font-size: 21px; font-weight: 500; line-height: 24px; color: #eee; text-align: center; white-space: nowrap; display: block; }

.paste { width: 68px; display: flex; flex-direction: column; align-items: center; flex: none; }
.paste svg { margin-top: -1px; align-self: flex-start; }
.paste .lbl { margin-top: 8px; }
.m-p { margin-left: -4px; margin-top: 24px; }
.clip { margin-left: 16px; display: flex; flex-direction: column; align-items: flex-start; }
.m-sc { margin-top: -4px; margin-left: 6px; }
.copy { display: flex; align-items: center; margin-top: 8px; }
.copy .ch { margin-left: 14px; }
.m-br { margin-top: 10px; }

.sel { display: flex; align-items: center; justify-content: space-between; height: 48px; background: #333; border-radius: 8px; border-bottom: 2px solid #4a4a4a; border-top: 1px solid #3c3c3c; font-size: 23.500px; font-weight: 500; color: #eee; padding: 0 9px 0 12px; }
.sel-font { width: 282px; }
.sel-size { width: 108px; margin-left: 4px; padding-left: 12px; }
.sel-num { width: 309px; }
.big-a { font: 300 38px "Inter", sans-serif; fill: #ccc; }
.mid-a { font: 300 32px "Inter", sans-serif; fill: #ccc; }
.btn { display: flex; align-items: center; justify-content: center; height: 48px; color: #ccc; flex: none; }
.on-b { background: #4a4a4a; border-radius: 8px; font-weight: 700; font-size: 26px; }
.w48 { width: 48px; }
.w46 { width: 46px; }
.ital { font: italic 400 32px "Liberation Serif", serif; }
.und { font-size: 28px; font-weight: 300; text-decoration: underline; text-underline-offset: 5px; }
.div { width: 2px; height: 36px; background: #4a4a4a; }
.color-a { font: 300 32px "Inter", sans-serif; fill: #ccc; text-anchor: middle; }
.ab-rot { font: 400 20px "Inter", sans-serif; fill: #bbb; }
.wrap-t { font: 400 22px "Inter", sans-serif; fill: #bbb; }
.cmd { font-size: 21px; font-weight: 500; color: #eee; white-space: nowrap; }
.cc { font: 700 14px "Inter", sans-serif; fill: #ccc; }
.pct { font-size: 38px; font-weight: 300; color: #ccc; width: 31px; display: block; text-align: center; line-height: 48px; }
.dec { font: 300 18px "Inter", sans-serif; fill: #ccc; text-anchor: end; }

.m2 { margin-left: 2px; } .m4 { margin-left: 4px; } .m6 { margin-left: 6px; } .m7 { margin-left: 7px; } .m8 { margin-left: 8px; } .m9 { margin-left: 9px; }
.m10 { margin-left: 10px; } .m11 { margin-left: 11px; } .m12 { margin-left: 12px; } .m13 { margin-left: 13px; } .m14 { margin-left: 14px; } .m16 { margin-left: 16px; }
.m18 { margin-left: 18px; } .m20 { margin-left: 20px; } .m22 { margin-left: 22px; } .m23 { margin-left: 23px; } .m24 { margin-left: 24px; } .m26 { margin-left: 26px; } .m31 { margin-left: 31px; }

.big { display: flex; flex-direction: column; align-items: center; flex: none; }
.w120 { width: 120px; } .w100 { width: 100px; } .w90 { width: 90px; }
.bt { display: flex; height: 69px; align-items: flex-start; }
.t6 { margin-top: 6px; }
.t-4 { margin-top: -4px; }
.t24 { margin-top: 24px; }
.stack { width: 68px; flex: none; margin-top: -2px; }
.sr { height: 43px; display: flex; align-items: flex-start; }
.sr .ch { margin-top: 10px; }
.az-a { font: 300 38px "Inter", sans-serif; fill: #3f9ade; }
.az-z { font: 300 34px "Inter", sans-serif; fill: #ccc; }

/* Formula bar */
.fbar { height: 54px; flex: none; border-top: 2px solid #000; display: flex; align-items: center; }
.namebox { width: 170px; height: 50px; background: #222; border: 2px solid #444; display: flex; align-items: center; justify-content: space-between; padding: 0 6px 0 18px; font-size: 25px; color: #ddd; flex: none; }
.fx-x { margin-left: 30px; }
.fx-c { margin-left: 32px; }
.fx { font: italic 400 34px "Liberation Serif", serif; color: #888; margin-left: 18px; width: 34px; }
.fx-ch { margin-left: 7px; }
.finput { margin-left: 6px; flex: 1; height: 40px; background: #383838; border-radius: 6px 0 0 6px; border-bottom: 2px solid #333; display: flex; align-items: center; justify-content: space-between; padding-left: 15px; font-size: 23.500px; font-weight: 500; color: #f0f0f0; }
.finput > span:first-child { padding-top: 2px; }
.fdrop { width: 46px; height: 36px; background: #2a2a2a; border-radius: 4px; display: flex; align-items: center; justify-content: center; }
.fsep { height: 5px; flex: none; background: #f0f0f0; border-top: 1px solid #aaa; border-bottom: 1px solid #aaa; }

/* Sheet */
.sheet { flex: 1; min-height: 0; display: flex; flex-direction: column; overflow: hidden; background: #fff; }
.cols { height: 45px; flex: none; display: flex; background: #181818; border-bottom: 2px solid #bbb; font: 600 20px "Open Sans", sans-serif; color: #eee; }
.corner { width: 47px; flex: none; background: #181818; border-right: 2px solid #ccc; display: flex; align-items: flex-end; justify-content: flex-end; padding: 0 4px 3px 0; }
.col { flex: none; display: flex; align-items: center; justify-content: center; border-right: 2px solid #555; padding-left: 3px; }
.ca { width: 22px; padding-left: 0; }
.cb { width: 311px; }
.cc2 { width: 228px; }
.cd { width: 335px; }
.cm { width: 132px; }
.cn { width: 190px; }
.co { width: 24px; padding-left: 0; }
.cp { width: 104px; }
.sel-col { background: #5a5a5a; box-shadow: inset 0 -4px 0 #1e7145; border-right-color: #5a5a5a; }

.body { display: flex; flex: 1; min-height: 0; }
.rows { width: 45px; flex: none; background: #161616; font: 600 21px "Open Sans", sans-serif; color: #eee; overflow: hidden; }
.rh { display: flex; align-items: flex-end; justify-content: center; border-bottom: 2px solid #555; overflow: hidden; line-height: 24px; padding-bottom: 0; }
.h4 { height: 4px; padding: 0; } .h15 { height: 15px; padding-bottom: 5px; } .h30 { height: 30px; } .h37 { height: 37px; } .h38 { height: 38px; } .h41 { height: 41px; } .h42 { height: 42px; } .h50 { height: 50px; } .h52 { height: 52px; } .h54 { height: 54px; } .h126 { height: 126px; }
.rsel { background: #5a5a5a; box-shadow: inset -3px 0 0 #1e7145; }

.grid { flex: 1; min-width: 0; padding: 2px 0 0 23px; overflow: hidden; font: 400 20.600px "Liberation Sans", Arial, sans-serif; color: #2c3e50; }
.title { width: 2278px; height: 128px; background: #922b21; color: #fff; font-weight: 700; font-size: 43px; display: flex; align-items: center; justify-content: center; padding-top: 2px; }
.sub { width: 2278px; height: 42px; background: #fdf2dc; font-style: italic; font-size: 18.900px; color: #333; display: flex; align-items: center; justify-content: center; white-space: pre; }
.gold { width: 2278px; height: 16px; background: #c8962a; }
.sec { width: 2254px; height: 38px; display: flex; align-items: center; padding-left: 6px; font-weight: 700; position: relative; }
.sec-rev { margin-top: -2px; background: #fdf2dc; color: #922b21; }
.sec-cost { margin-top: 28px; background: #fadbd8; color: #c0392b; }

.tbl { display: grid; gap: 2px; padding: 2px; background: #ccc; }
.t-rev { width: 2254px; grid-template-columns: 310px 225px 333px repeat(9, 130px) 188px; grid-template-rows: 48px repeat(8, 40px) 48px; }
.t-cost { width: 876px; grid-template-columns: 310px 225px 333px; grid-template-rows: 48px repeat(8, 40px); }
.t-exp { width: 541px; grid-template-columns: 310px 225px; grid-template-rows: 48px; padding-top: 0; }
.th, .tt { display: flex; align-items: center; justify-content: center; font-weight: 700; color: #fff; white-space: nowrap; font-size: 20px; }
.tt { font-size: 22px; }
.red1 { background: #922b21; }
.red2 { background: #c0392b; }
.navy { background: #2c3e50; }
.green { background: #1e8449; }
.lb { background: #fff; display: flex; align-items: center; padding: 2px 0 0 4px; white-space: nowrap; }
.nt { background: #fff; }
.pk1 { background: #f9ebea; }
.pk2 { background: #fadbd8; }
.y, .at, .tr { display: flex; align-items: center; justify-content: flex-end; padding: 2px 5px 0 0; font-size: 20.200px; }
.y { background: #ffff99; color: #1f4e79; }
.at { background: #922b21; color: #fff; font-weight: 700; }
.tr { color: #fff; font-weight: 700; font-size: 22px; }
.active { position: relative; }
.active::before { content: ""; position: absolute; left: -4px; top: -4px; right: -4px; bottom: -4px; border: 5px solid #1e7145; box-shadow: inset 0 0 0 2px #fff; }
.handle { position: absolute; right: -5px; bottom: -6px; width: 12px; height: 12px; background: #1e7145; box-shadow: 0 0 0 1px #fff; }

.profit { margin-top: 28px; width: 2254px; height: 38px; background: #2c3e50; color: #fff; font-weight: 700; font-size: 22px; display: flex; align-items: center; justify-content: center; padding-top: 2px; }
.pr { width: 2254px; height: 54px; display: flex; }
.pl { width: 1534px; display: flex; align-items: center; padding: 2px 0 0 6px; color: #fff; font-weight: 700; font-size: 22.500px; }
.pv { flex: 1; background: #fff; display: flex; align-items: center; justify-content: flex-end; padding-right: 6px; font-weight: 700; font-size: 29px; border-top: 2px solid #ccc; }
.pv-g { color: #1e8449; }
.pv-r { color: #c0392b; padding-bottom: 8px; }

/* Sheet tabs */
.tabsbar { height: 52px; flex: none; background: #333; border-top: 2px solid #666; display: flex; }
.nav { width: 120px; flex: none; display: flex; gap: 31px; align-items: center; padding: 0 0 4px 29px; border-right: 2px solid #555; }
.strip { background: #232323; display: flex; align-items: flex-start; height: 50px; font-size: 23.700px; font-weight: 500; width: 678px; flex: none; padding-left: 8px; }
.st { display: flex; align-items: center; justify-content: center; height: 40px; margin-top: 4px; flex: none; white-space: nowrap; }
.st-d { width: 176px; background: #2c3e50; color: #fff; }
.st-w { display: block; margin-left: 8px; width: 156px; height: 44px; margin-top: -2px; border: 6px solid #fff; border-radius: 0 0 4px 4px; flex: none; }
.st-s { display: flex; align-items: center; justify-content: center; height: 100%; padding-top: 4px; background: linear-gradient(#f3e7e7, #cf9f9b); color: #1e8449; }
.st-i { width: 156px; margin-left: 8px; background: #c0392b; color: #fff; }
.st-sep { width: 2px; height: 40px; background: #555; margin: 0 6px; }
.st-p { width: 144px; margin-left: 0; background: #c8962a; color: #111; }
.plus { width: 76px; height: 50px; flex: none; border-right: 2px solid #555; border-left: 2px solid #555; display: flex; align-items: center; justify-content: center; padding-bottom: 6px; }

/* Status bar */
.status { height: 56px; flex: none; background: #282828; border-top: 2px solid #000; display: flex; align-items: center; padding-left: 49px; font-size: 23.800px; color: #e4e4e4; }
.ready { width: 69px; white-space: nowrap; }
.acc { margin-left: 44px; }
.acc-t { margin-left: 8px; white-space: nowrap; width: 277px; }
.view { margin-left: 1768px; width: 62px; height: 44px; border-radius: 8px; display: flex; align-items: center; justify-content: center; }
.on-v { background: #5f5f5f; }
.v-page { margin-left: 29px; }
.v-break { margin-left: 46px; }
.z-minus { margin-left: 37px; width: 16px; height: 3px; background: #eee; }
.slider { margin-left: 14px; width: 200px; height: 8px; border-radius: 4px; background: #6b6b6b; position: relative; }
.zknob { position: absolute; left: 84px; top: -12px; width: 32px; height: 32px; border-radius: 50%; background: #8f8f8f; }
.z-plus { margin-left: 13px; }
.zoom { margin-left: 33px; white-space: nowrap; font-weight: 300; }
```
